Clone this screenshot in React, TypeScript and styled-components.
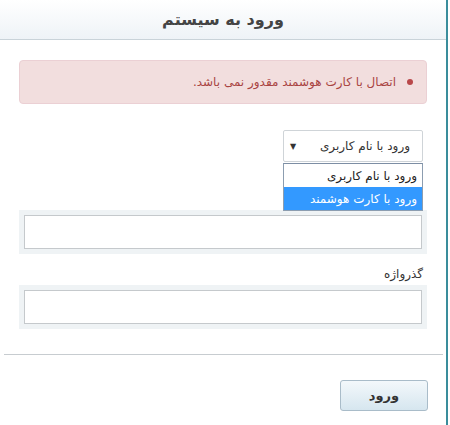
import React, {FC} from 'react';
import styled, {createGlobalStyle} from 'styled-components';

const GlobalStyle = createGlobalStyle`
    html, body {
        margin: 0;
        padding: 0;
        background: #fff;
    }
    body {
        font-family: "DejaVu Sans", "Noto Sans", sans-serif;
        color: #333;
    }
`;

const Panel = styled.div`
    width: 448px;
    height: 425px;
    border-right: 2px solid #3a8d9c;
    background: #fff;
    box-sizing: border-box;
`;

const Header = styled.div`
    height: 39px;
    border-bottom: 1px solid #c9d3d9;
    background: linear-gradient(to bottom, #ffffff 0%, #eef3f7 100%);
    display: flex;
    align-items: center;
    justify-content: center;
`;

const Title = styled.h1`
    margin: 0;
    font-size: 16px;
    font-weight: bold;
    color: #444;
`;

const Body = styled.div`
    padding: 20px 19px 25px 19px;
`;

const Alert = styled.ul`
    margin: 0;
    height: 44px;
    box-sizing: border-box;
    padding: 0 30px 0 10px;
    background: #f2dede;
    border: 1px solid #ebd0d4;
    border-radius: 4px;
    color: #a94442;
    font-size: 12px;
    display: flex;
    align-items: center;
    list-style: none;
`;

const AlertItem = styled.li`
    position: relative;
    &::before {
        content: '';
        position: absolute;
        right: -17px;
        top: 50%;
        margin-top: -3px;
        width: 6px;
        height: 6px;
        border-radius: 50%;
        background: #b9484a;
    }
`;

const SelectRow = styled.div`
    margin-top: 26px;
    margin-bottom: 48px;
    padding-right: 4px;
    display: flex;
    justify-content: flex-start;
    position: relative;
`;

const SelectBox = styled.div`
    width: 140px;
    height: 32px;
    box-sizing: border-box;
    border: 1px solid #cfd4d8;
    border-radius: 2px;
    background: #fff;
    display: flex;
    align-items: center;
    justify-content: space-between;
    padding: 0 12px 0 6px;
    font-size: 12px;
    color: #333;
`;

const Arrow = styled.span`
    font-size: 8px;
    color: #333;
`;

const OptionList = styled.div`
    position: absolute;
    top: 33px;
    right: 4px;
    width: 140px;
    box-sizing: border-box;
    border: 1px solid #8c9db0;
    border-top-color: #7d8ea4;
    background: #fff;
    z-index: 2;
`;

const Option = styled.div<{ $active?: boolean }>`
    height: 23px;
    display: flex;
    align-items: center;
    padding: 0 5px;
    font-size: 12px;
    color: ${p => p.$active ? '#fff' : '#222'};
    background: ${p => p.$active ? '#3399ff' : '#fff'};
`;

const Group = styled.div<{ $gap?: number }>`
    margin-top: ${p => p.$gap ?? 0}px;
`;

const Label = styled.label`
    display: block;
    height: 21px;
    font-size: 12px;
    color: #333;
    padding-right: 4px;
    line-height: 21px;
`;

const InputWell = styled.div`
    background: #eff3f5;
    padding: 5px;
`;

const Input = styled.input`
    display: block;
    width: 100%;
    height: 34px;
    box-sizing: border-box;
    border: 1px solid #c5c9cc;
    background: #fff;
    outline: none;
`;

const Footer = styled.div`
    margin: 0 3px 0 4px;
    border-top: 1px solid #c7ccd0;
    padding: 25px 15px 0 0;
    display: flex;
`;

const Button = styled.button`
    width: 88px;
    height: 31px;
    border: 1px solid #a9bcc9;
    border-radius: 3px;
    background: linear-gradient(to bottom, #f3f8fb 0%, #d6e6ef 100%);
    font-family: "DejaVu Sans", sans-serif;
    font-size: 13px;
    font-weight: bold;
    color: #333;
`;

const App: FC = () => {
    return <>
        <GlobalStyle/>
        <Panel dir="rtl">
            <Header>
                <Title>ورود به سیستم</Title>
            </Header>
            <Body>
                <Alert>
                    <AlertItem>اتصال با کارت هوشمند مقدور نمی باشد.</AlertItem>
                </Alert>
                <SelectRow>
                    <SelectBox>
                        <span>ورود با نام کاربری</span>
                        <Arrow>▼</Arrow>
                    </SelectBox>
                    <OptionList>
                        <Option>ورود با نام کاربری</Option>
                        <Option $active>ورود با کارت هوشمند</Option>
                    </OptionList>
                </SelectRow>
                <Group>
                    <InputWell><Input type="text"/></InputWell>
                </Group>
                <Group $gap={10}>
                    <Label>گذرواژه</Label>
                    <InputWell><Input type="password"/></InputWell>
                </Group>
            </Body>
            <Footer>
                <Button>ورود</Button>
            </Footer>
        </Panel>
    </>;
}

export default App;
